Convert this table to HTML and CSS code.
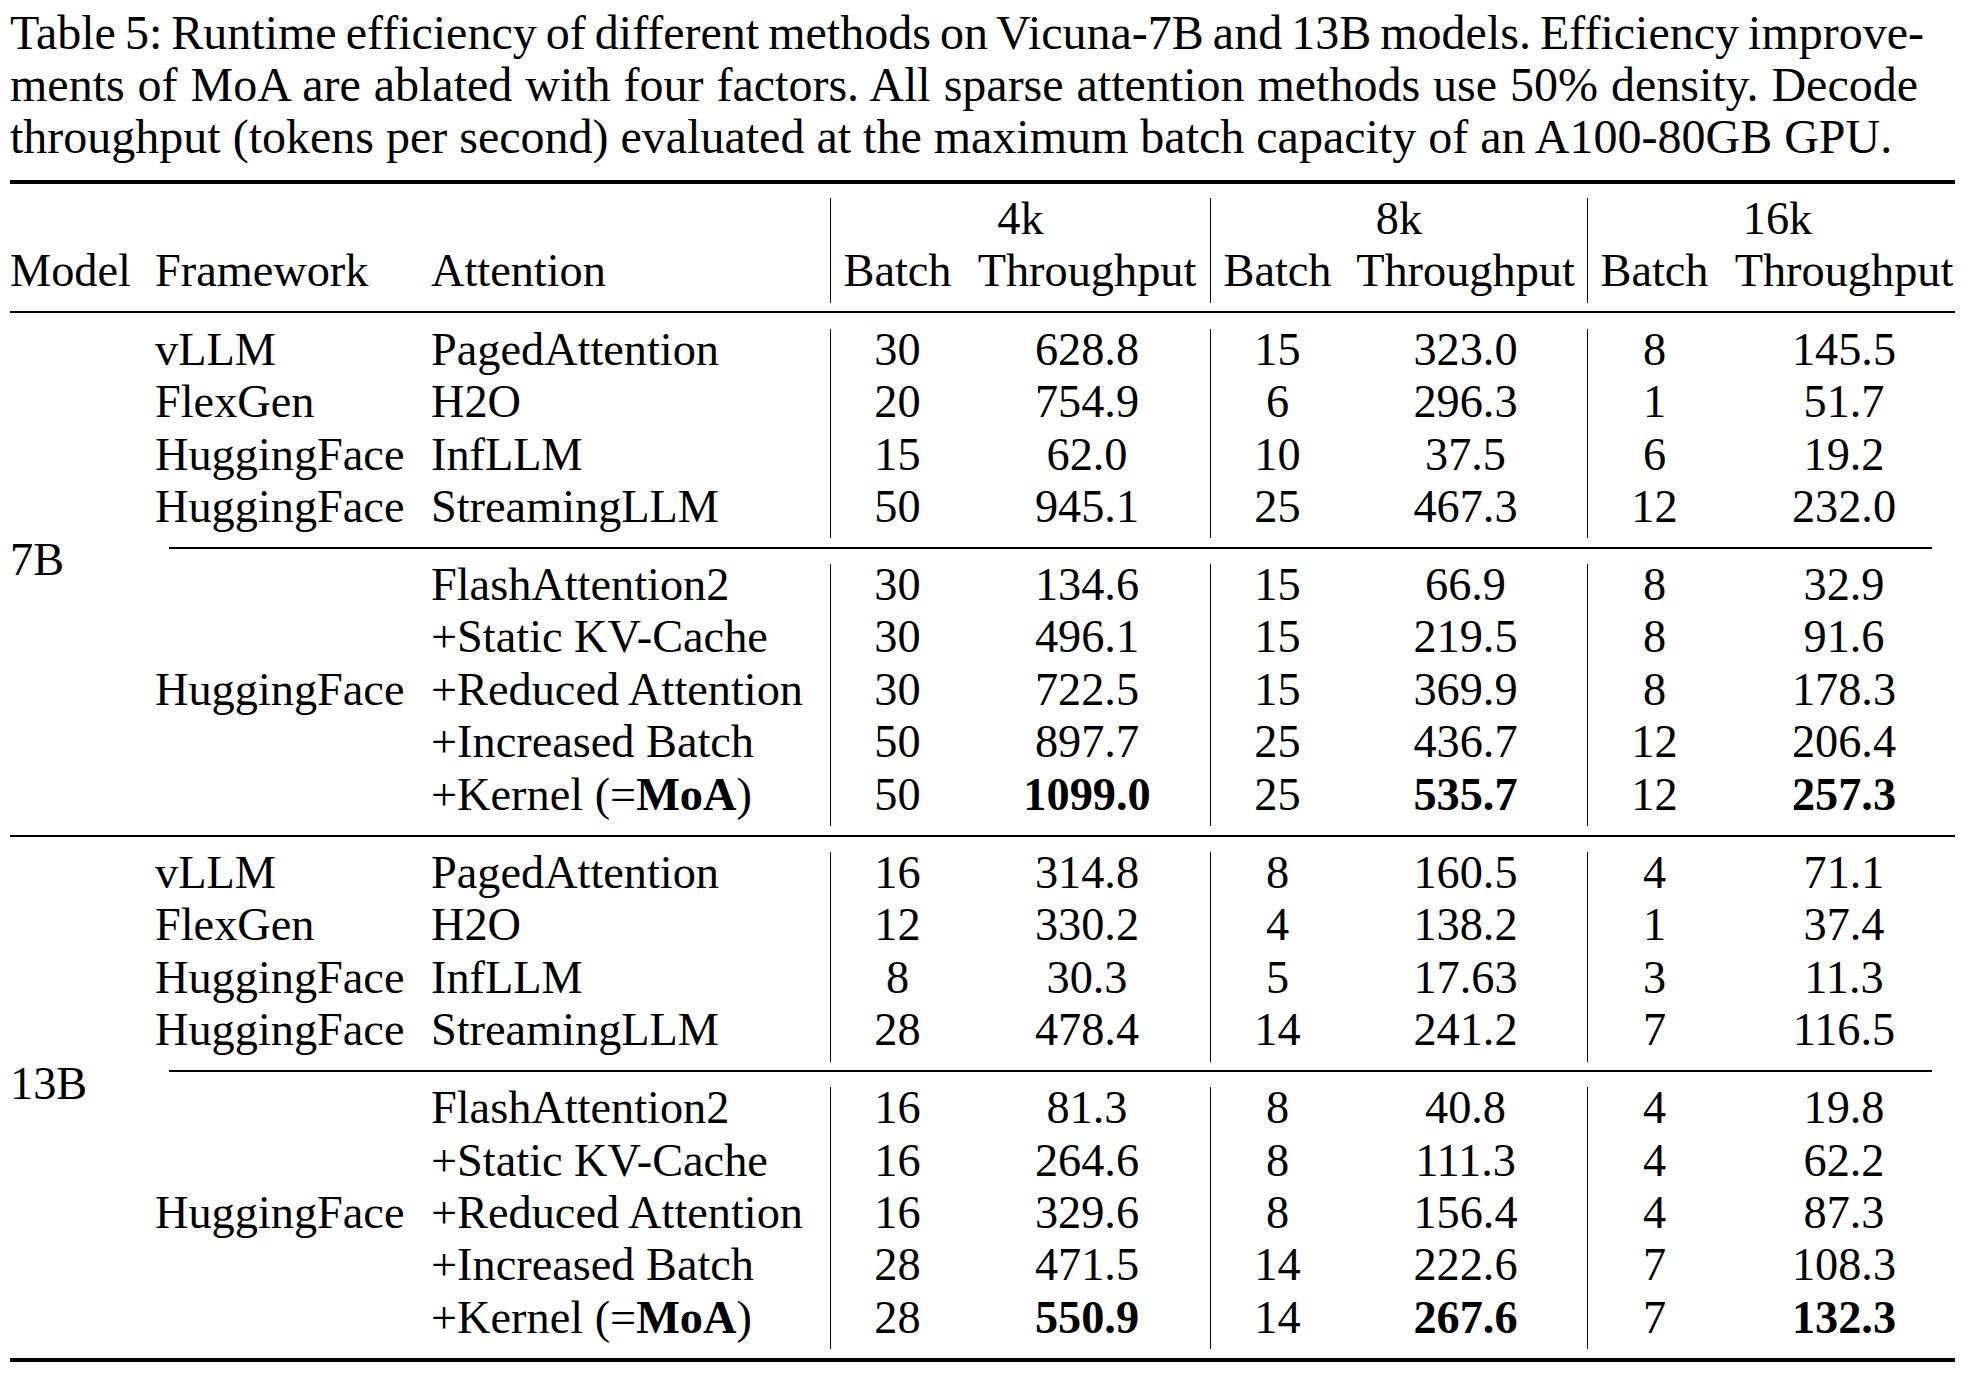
FILE: index.html
```html
<!DOCTYPE html>
<html>
<head>
<meta charset="utf-8">
<link rel="stylesheet" href="styles.css">
</head>
<body>
<div class="page">
  <div class="caption">
    <div class="cap-line just hyph">Table 5: Runtime efficiency of different methods on Vicuna-7B and 13B models. Efficiency improve-</div>
    <div class="cap-line just">ments of MoA are ablated with four factors. All sparse attention methods use 50% density. Decode</div>
    <div class="cap-line">throughput (tokens per second) evaluated at the maximum batch capacity of an A100-80GB GPU.</div>
  </div>

  <table class="tbl">
    <colgroup>
      <col class="w1"><col class="w2"><col class="w3"><col class="w4"><col class="w5"><col class="w6"><col class="w7"><col class="w8"><col class="w9">
    </colgroup>
    <tbody>
      <tr class="rule-row"><td colspan="9"><div class="heavy"></div></td></tr>
      <tr class="gap g-below-heavy"><td colspan="9"></td></tr>

      <tr>
        <td class="l first"></td><td class="l"></td><td class="l"></td>
        <td class="c vl" colspan="2">4k</td>
        <td class="c vl" colspan="2">8k</td>
        <td class="c vl last" colspan="2">16k</td>
      </tr>
      <tr>
        <td class="l first">Model</td><td class="l">Framework</td><td class="l">Attention</td>
        <td class="c vl">Batch</td><td class="c">Throughput</td>
        <td class="c vl">Batch</td><td class="c">Throughput</td>
        <td class="c vl">Batch</td><td class="c last">Throughput</td>
      </tr>

      <tr class="gap g-above"><td colspan="9"></td></tr>
      <tr class="rule-row"><td colspan="9"><div class="mid"></div></td></tr>
      <tr class="gap g-below"><td colspan="9"></td></tr>

      <!-- 7B block 1 -->
      <tr>
        <td class="l first model" rowspan="12">7B</td>
        <td class="l">vLLM</td><td class="l">PagedAttention</td>
        <td class="c vl">30</td><td class="c">628.8</td>
        <td class="c vl">15</td><td class="c">323.0</td>
        <td class="c vl">8</td><td class="c last">145.5</td>
      </tr>
      <tr>
        <td class="l">FlexGen</td><td class="l">H2O</td>
        <td class="c vl">20</td><td class="c">754.9</td>
        <td class="c vl">6</td><td class="c">296.3</td>
        <td class="c vl">1</td><td class="c last">51.7</td>
      </tr>
      <tr>
        <td class="l">HuggingFace</td><td class="l">InfLLM</td>
        <td class="c vl">15</td><td class="c">62.0</td>
        <td class="c vl">10</td><td class="c">37.5</td>
        <td class="c vl">6</td><td class="c last">19.2</td>
      </tr>
      <tr>
        <td class="l">HuggingFace</td><td class="l">StreamingLLM</td>
        <td class="c vl">50</td><td class="c">945.1</td>
        <td class="c vl">25</td><td class="c">467.3</td>
        <td class="c vl">12</td><td class="c last">232.0</td>
      </tr>

      <tr class="gap g-above"><td colspan="8"></td></tr>
      <tr class="rule-row"><td colspan="8"><div class="cmid"></div></td></tr>
      <tr class="gap g-below"><td colspan="8"></td></tr>

      <!-- 7B block 2 -->
      <tr>
        <td class="l"></td><td class="l">FlashAttention2</td>
        <td class="c vl">30</td><td class="c">134.6</td>
        <td class="c vl">15</td><td class="c">66.9</td>
        <td class="c vl">8</td><td class="c last">32.9</td>
      </tr>
      <tr>
        <td class="l"></td><td class="l">+Static KV-Cache</td>
        <td class="c vl">30</td><td class="c">496.1</td>
        <td class="c vl">15</td><td class="c">219.5</td>
        <td class="c vl">8</td><td class="c last">91.6</td>
      </tr>
      <tr>
        <td class="l">HuggingFace</td><td class="l">+Reduced Attention</td>
        <td class="c vl">30</td><td class="c">722.5</td>
        <td class="c vl">15</td><td class="c">369.9</td>
        <td class="c vl">8</td><td class="c last">178.3</td>
      </tr>
      <tr>
        <td class="l"></td><td class="l">+Increased Batch</td>
        <td class="c vl">50</td><td class="c">897.7</td>
        <td class="c vl">25</td><td class="c">436.7</td>
        <td class="c vl">12</td><td class="c last">206.4</td>
      </tr>
      <tr>
        <td class="l"></td><td class="l">+Kernel (=<b>MoA</b>)</td>
        <td class="c vl">50</td><td class="c"><b>1099.0</b></td>
        <td class="c vl">25</td><td class="c"><b>535.7</b></td>
        <td class="c vl">12</td><td class="c last"><b>257.3</b></td>
      </tr>

      <tr class="gap g-above"><td colspan="9"></td></tr>
      <tr class="rule-row"><td colspan="9"><div class="mid"></div></td></tr>
      <tr class="gap g-below"><td colspan="9"></td></tr>

      <!-- 13B block 1 -->
      <tr>
        <td class="l first model" rowspan="12">13B</td>
        <td class="l">vLLM</td><td class="l">PagedAttention</td>
        <td class="c vl">16</td><td class="c">314.8</td>
        <td class="c vl">8</td><td class="c">160.5</td>
        <td class="c vl">4</td><td class="c last">71.1</td>
      </tr>
      <tr>
        <td class="l">FlexGen</td><td class="l">H2O</td>
        <td class="c vl">12</td><td class="c">330.2</td>
        <td class="c vl">4</td><td class="c">138.2</td>
        <td class="c vl">1</td><td class="c last">37.4</td>
      </tr>
      <tr>
        <td class="l">HuggingFace</td><td class="l">InfLLM</td>
        <td class="c vl">8</td><td class="c">30.3</td>
        <td class="c vl">5</td><td class="c">17.63</td>
        <td class="c vl">3</td><td class="c last">11.3</td>
      </tr>
      <tr>
        <td class="l">HuggingFace</td><td class="l">StreamingLLM</td>
        <td class="c vl">28</td><td class="c">478.4</td>
        <td class="c vl">14</td><td class="c">241.2</td>
        <td class="c vl">7</td><td class="c last">116.5</td>
      </tr>

      <tr class="gap g-above"><td colspan="8"></td></tr>
      <tr class="rule-row"><td colspan="8"><div class="cmid"></div></td></tr>
      <tr class="gap g-below"><td colspan="8"></td></tr>

      <!-- 13B block 2 -->
      <tr>
        <td class="l"></td><td class="l">FlashAttention2</td>
        <td class="c vl">16</td><td class="c">81.3</td>
        <td class="c vl">8</td><td class="c">40.8</td>
        <td class="c vl">4</td><td class="c last">19.8</td>
      </tr>
      <tr>
        <td class="l"></td><td class="l">+Static KV-Cache</td>
        <td class="c vl">16</td><td class="c">264.6</td>
        <td class="c vl">8</td><td class="c">111.3</td>
        <td class="c vl">4</td><td class="c last">62.2</td>
      </tr>
      <tr>
        <td class="l">HuggingFace</td><td class="l">+Reduced Attention</td>
        <td class="c vl">16</td><td class="c">329.6</td>
        <td class="c vl">8</td><td class="c">156.4</td>
        <td class="c vl">4</td><td class="c last">87.3</td>
      </tr>
      <tr>
        <td class="l"></td><td class="l">+Increased Batch</td>
        <td class="c vl">28</td><td class="c">471.5</td>
        <td class="c vl">14</td><td class="c">222.6</td>
        <td class="c vl">7</td><td class="c last">108.3</td>
      </tr>
      <tr>
        <td class="l"></td><td class="l">+Kernel (=<b>MoA</b>)</td>
        <td class="c vl">28</td><td class="c"><b>550.9</b></td>
        <td class="c vl">14</td><td class="c"><b>267.6</b></td>
        <td class="c vl">7</td><td class="c last"><b>132.3</b></td>
      </tr>

      <tr class="gap g-above"><td colspan="9"></td></tr>
      <tr class="rule-row"><td colspan="9"><div class="heavy"></div></td></tr>
    </tbody>
  </table>
</div>
</body>
</html>
```

FILE: styles.css
```css
html, body {
  margin: 0;
  padding: 0;
  background: #ffffff;
}

body {
  color: #000000;
  font-family: "Liberation Serif", "Times New Roman", Times, serif;
}

.page {
  padding: 7px 0 0 10px;
}

.caption {
  width: 1908px;
  font-size: 48px;
  line-height: 52px;
  margin-bottom: 17px;
}

.cap-line {
  white-space: nowrap;
}

.cap-line.just {
  text-align: justify;
  text-align-last: justify;
  white-space: normal;
}

.cap-line.hyph {
  margin-right: -6px;
  word-spacing: -6px;
}

.tbl {
  border-collapse: separate;
  border-spacing: 0;
  table-layout: fixed;
  width: 1945px;
  font-size: 46.3px;
}

.w1 { width: 133px; }
.w2 { width: 276px; }
.w3 { width: 411px; }
.w4 { width: 134px; }
.w5 { width: 246px; }
.w6 { width: 134px; }
.w7 { width: 243px; }
.w8 { width: 134px; }
.w9 { width: 234px; }

.tbl td {
  padding: 0 12px 10.2px 12px;
  line-height: 42.2px;
  vertical-align: top;
  white-space: nowrap;
}

.tbl td.first {
  padding-left: 0;
}

.tbl td.last {
  padding-right: 0;
}

.tbl td.l {
  text-align: left;
}

.tbl td.c {
  text-align: center;
}

.tbl td.vl {
  border-left: 1px solid #000000;
}

.tbl td.model {
  vertical-align: middle;
  padding-bottom: 34px;
}

.tbl b {
  font-weight: bold;
}

.tbl tr.gap td,
.tbl tr.rule-row td {
  padding: 0;
  line-height: 0;
  font-size: 0;
  border: none;
}

.tbl tr.g-below-heavy td { height: 14px; }
.tbl tr.g-above td { height: 8.6px; }
.tbl tr.g-below td { height: 15.5px; }

.heavy {
  height: 4px;
  background: #000000;
}

.mid {
  height: 2px;
  background: #000000;
}

.cmid {
  height: 1.5px;
  background: #000000;
  margin: 0 23px 0 26px;
}
```
